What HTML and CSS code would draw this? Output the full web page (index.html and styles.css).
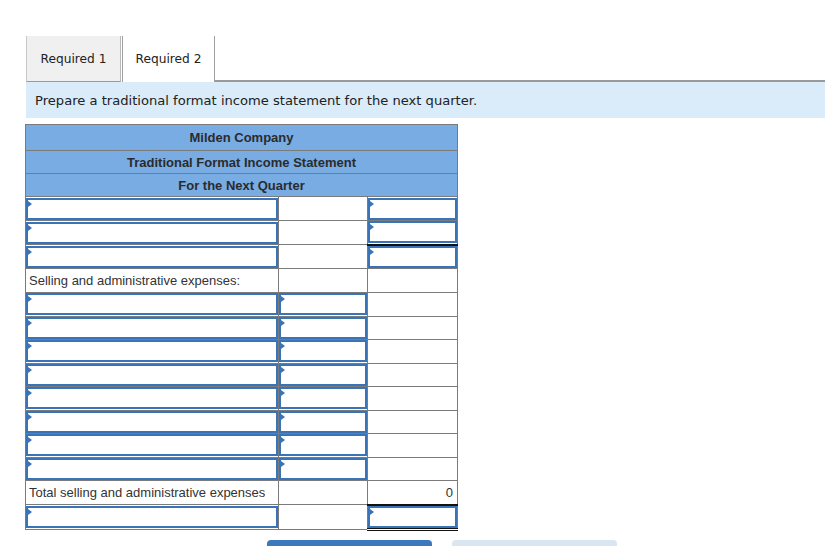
FILE: index.html
```html
<!DOCTYPE html>
<html>
<head>
<meta charset="utf-8">
<link rel="stylesheet" href="styles.css">
</head>
<body>
<div class="tabs">
  <div class="tab tab-inactive">Required 1</div>
  <div class="tab tab-active">Required 2</div>
  <div class="tab-fill"></div>
</div>
<div class="prompt">Prepare a traditional format income statement for the next quarter.</div>
<table class="stmt">
  <colgroup><col class="c1"><col class="c2"><col class="c3"></colgroup>
  <tr class="hdr h1"><td colspan="3">Milden Company</td></tr>
  <tr class="hdr"><td colspan="3">Traditional Format Income Statement</td></tr>
  <tr class="hdr"><td colspan="3">For the Next Quarter</td></tr>
  <tr><td class="ic"><div class="inp"></div></td><td></td><td class="ic"><div class="inp"></div></td></tr>
  <tr><td class="ic"><div class="inp"></div></td><td></td><td class="ic"><div class="inp"></div></td></tr>
  <tr><td class="ic"><div class="inp"></div></td><td></td><td class="ic top-dark"><div class="inp"></div></td></tr>
  <tr><td class="lbl">Selling and administrative expenses:</td><td></td><td></td></tr>
  <tr class="r"><td class="ic"><div class="inp"></div></td><td class="ic"><div class="inp"></div></td><td></td></tr>
  <tr class="r"><td class="ic"><div class="inp"></div></td><td class="ic"><div class="inp"></div></td><td></td></tr>
  <tr class="r"><td class="ic"><div class="inp"></div></td><td class="ic"><div class="inp"></div></td><td></td></tr>
  <tr class="r"><td class="ic"><div class="inp"></div></td><td class="ic"><div class="inp"></div></td><td></td></tr>
  <tr class="r"><td class="ic"><div class="inp"></div></td><td class="ic"><div class="inp"></div></td><td></td></tr>
  <tr class="r"><td class="ic"><div class="inp"></div></td><td class="ic"><div class="inp"></div></td><td></td></tr>
  <tr class="r"><td class="ic"><div class="inp"></div></td><td class="ic"><div class="inp"></div></td><td></td></tr>
  <tr class="r"><td class="ic"><div class="inp"></div></td><td class="ic"><div class="inp"></div></td><td></td></tr>
  <tr><td class="lbl">Total selling and administrative expenses</td><td></td><td class="num">0</td></tr>
  <tr><td class="ic"><div class="inp"></div></td><td></td><td class="ic top-dark dbl"><div class="inp"></div></td></tr>
</table>
<div class="btns">
  <div class="btn btn-primary"></div>
  <div class="btn btn-light"></div>
</div>
</body>
</html>
```

FILE: styles.css
```css
html, body {
  margin: 0;
  padding: 0;
  background: #ffffff;
}
body {
  width: 825px;
  height: 546px;
  overflow: hidden;
  font-family: "DejaVu Sans", Verdana, sans-serif;
  color: #222;
}
.tabs {
  display: flex;
  padding: 36px 0 0 26px;
}
.tab {
  box-sizing: border-box;
  height: 46px;
  display: flex;
  align-items: center;
  justify-content: center;
  font-size: 12.2px;
  color: #222;
}
.tab-inactive {
  width: 95px;
  background: #f0f0f0;
  border-left: 1px solid #c8c8c8;
  border-right: 1px solid #b8b8b8;
  border-bottom: 1px solid #9a9a9a;
  margin-right: 1px;
}
.tab-active {
  width: 93px;
  background: #ffffff;
  border-left: 1px solid #a0a0a0;
  border-right: 1px solid #a0a0a0;
}
.tab-fill {
  flex: 1;
  border-bottom: 2px solid #9a9a9a;
}
.prompt {
  margin-left: 26px;
  height: 36px;
  background: #daebf9;
  padding-left: 9px;
  display: flex;
  align-items: center;
  font-size: 13.1px;
  color: #222;
}
.stmt {
  margin: 6px 0 0 25px;
  border-collapse: collapse;
  table-layout: fixed;
  width: 432px;
  font-family: "Liberation Sans", Arial, sans-serif;
  font-size: 13px;
  color: #333;
}
.c1 { width: 253px; }
.c2 { width: 89px; }
.c3 { width: 90px; }
.stmt td {
  border: 1px solid #7b7b7b;
  height: 24px;
  padding: 0;
  box-sizing: border-box;
}
.stmt tr.r td {
  height: 23.5px;
}
.hdr td {
  background: #78ace3;
  text-align: center;
  font-weight: bold;
  height: 23px;
  color: #2b2b2b;
}
.hdr.h1 td {
  height: 26px;
}
.stmt td.lbl {
  padding-left: 3px;
  white-space: nowrap;
}
.stmt td.num {
  text-align: right;
  padding-right: 4px;
}
.stmt td.ic {
  padding: 0;
}
.inp {
  position: relative;
  box-sizing: border-box;
  height: 22px;
  border: 2px solid #3a74b8;
  background: #fff;
}
.inp::before {
  content: "";
  position: absolute;
  left: 0;
  top: 1px;
  border-top: 3px solid transparent;
  border-bottom: 3px solid transparent;
  border-left: 4px solid #3a74b8;
}
.stmt td.top-dark {
  border-top: 2px solid #111;
}
.stmt td.dbl {
  border-bottom: 3px double #111;
}
.btns {
  display: flex;
  gap: 20px;
  margin: 9px 0 0 267px;
}
.btn {
  width: 165px;
  height: 30px;
  flex: none;
  border-radius: 4px 4px 0 0;
}
.btn-primary {
  background: #3b78bd;
}
.btn-light {
  background: #dae5f2;
}
```
